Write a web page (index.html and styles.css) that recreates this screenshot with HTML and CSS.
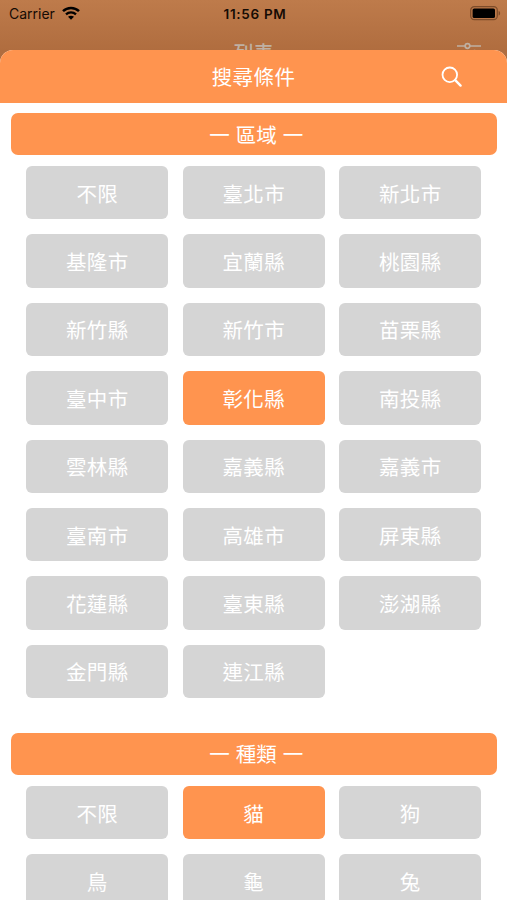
FILE: index.html
```html
<!DOCTYPE html>
<html lang="zh-Hant">

<head>
    <meta charset="UTF-8">
    <meta name="viewport" content="width=device-width, initial-scale=1.0">
    <title>搜尋條件</title>
    <link rel="stylesheet" href="styles.css">
</head>

<body>
    <div class="backdrop">
        <div class="status-bar">
            <div class="carrier">
                <span>Carrier</span>
                <svg class="wifi" width="18" height="14" viewBox="0 0 18 14">
                    <path d="M1 5.2C5.4 0.9 12.6 0.9 17 5.2" fill="none" stroke="#000" stroke-width="2.5" />
                    <path d="M4 8.4C6.8 5.8 11.2 5.8 14 8.4" fill="none" stroke="#000" stroke-width="2.3" />
                    <path d="M9 13.8L6 10.8C7.7 9.3 10.3 9.3 12 10.8Z" fill="#000" />
                </svg>
            </div>
            <div class="time">11:56 PM</div>
            <svg class="battery" width="31" height="15" viewBox="0 0 31 15">
                <rect x="0.7" y="0.7" width="26.6" height="13" rx="3.6" fill="none" stroke="#7d4c2a" stroke-width="1.2" />
                <rect x="2.6" y="2.4" width="22.4" height="9.6" rx="1.6" fill="#000" />
                <path d="M28.6 5C30.6 5.6 30.6 8.9 28.6 9.5Z" fill="#7d4c2a" />
            </svg>
        </div>
        <div class="nav-bar">
            <span class="nav-title">列表</span>
            <svg class="sliders" width="26" height="22" viewBox="0 0 26 22" fill="none" stroke="#bfb0a3" stroke-width="1.7">
                <path d="M1 4H9M14 4H25M1 11H16M21 11H25M1 18H6M11 18H25" />
                <circle cx="11.5" cy="4" r="2.3" />
                <circle cx="18.5" cy="11" r="2.3" />
                <circle cx="8.5" cy="18" r="2.3" />
            </svg>
        </div>
    </div>

    <div class="sheet">
        <div class="sheet-header">
            <h1>搜尋條件</h1>
            <svg class="search" width="22" height="22" viewBox="0 0 22 22" fill="none" stroke="#fff">
                <circle cx="8.8" cy="8.8" r="7.3" stroke-width="1.8" />
                <path d="M14.2 14.2L19.6 19.6" stroke-width="2.4" stroke-linecap="round" />
            </svg>
        </div>

        <div class="section">
            <h2>一 區域 一</h2>
            <div class="options">
                <button>不限</button>
                <button>臺北市</button>
                <button>新北市</button>
                <button>基隆市</button>
                <button>宜蘭縣</button>
                <button>桃園縣</button>
                <button>新竹縣</button>
                <button>新竹市</button>
                <button>苗栗縣</button>
                <button>臺中市</button>
                <button class="selected">彰化縣</button>
                <button>南投縣</button>
                <button>雲林縣</button>
                <button>嘉義縣</button>
                <button>嘉義市</button>
                <button>臺南市</button>
                <button>高雄市</button>
                <button>屏東縣</button>
                <button>花蓮縣</button>
                <button>臺東縣</button>
                <button>澎湖縣</button>
                <button>金門縣</button>
                <button>連江縣</button>
            </div>
        </div>

        <div class="section">
            <h2>一 種類 一</h2>
            <div class="options">
                <button>不限</button>
                <button class="selected">貓</button>
                <button>狗</button>
                <button>鳥</button>
                <button>龜</button>
                <button>兔</button>
            </div>
        </div>
    </div>
</body>

</html>
```
FILE: styles.css
```css
* {
    box-sizing: border-box;
}

body {
    margin: 0;
    height: 900px;
    overflow: hidden;
    display: flex;
    flex-direction: column;
    background: #fff;
    font-family: "Noto Sans CJK TC", sans-serif;
    color: #fff;
}

.backdrop {
    flex: none;
    height: 84px;
    background: linear-gradient(to bottom, #be7b4b, #b06d3f 50px);
}

.status-bar {
    display: grid;
    grid-template-columns: 1fr auto 1fr;
    align-items: center;
    height: 27px;
    padding: 0 6px 0 9px;
    font-family: Inter, sans-serif;
    color: #150b04;
}

.carrier {
    display: flex;
    align-items: center;
    gap: 7px;
    font-size: 14px;
}

.wifi {
    margin-top: -2px;
}

.time {
    font-size: 13.5px;
    font-weight: 600;
    letter-spacing: 0.7px;
}

.battery {
    justify-self: end;
}

.nav-bar {
    display: grid;
    grid-template-columns: 1fr auto 1fr;
    align-items: center;
    height: 50px;
    padding: 0 25px;
}

.nav-title {
    grid-column: 2;
    font-size: 20px;
    font-weight: 500;
    color: #bfb0a3;
}

.sliders {
    justify-self: end;
    margin-top: 2px;
}

.sheet {
    flex: none;
    position: relative;
    margin-top: -34px;
    border-radius: 13px 13px 0 0;
    background: #fff;
    overflow: hidden;
}

.sheet-header {
    display: grid;
    grid-template-columns: 1fr auto 1fr;
    align-items: center;
    height: 53.4px;
    padding: 0 44px;
    background: #ff944f;
}

.sheet-header h1 {
    grid-column: 2;
    margin: -2px 0 0;
    font-size: 20.5px;
    font-weight: 400;
    letter-spacing: 0.4px;
}

.search {
    justify-self: end;
}

.section {
    padding: 10px 10px 0 10.5px;
}

.section + .section {
    padding-top: 35.2px;
}

.section h2 {
    display: flex;
    justify-content: center;
    align-items: center;
    height: 41.4px;
    margin: 0 0 11.2px;
    padding: 0 0 1px 5px;
    border-radius: 7px;
    background: #ff944f;
    font-size: 20.5px;
    font-weight: 400;
    word-spacing: 1.5px;
}

.options {
    display: grid;
    grid-template-columns: repeat(3, 1fr);
    gap: 15px 14.4px;
    padding: 0 15.7px;
}

.options button {
    height: 53.4px;
    padding: 0;
    border: none;
    border-radius: 6px;
    background: #d5d5d5;
    font-family: inherit;
    font-size: 20.5px;
    letter-spacing: 0.3px;
    color: #fff;
}

.options .selected {
    background: #ff944f;
}
```
